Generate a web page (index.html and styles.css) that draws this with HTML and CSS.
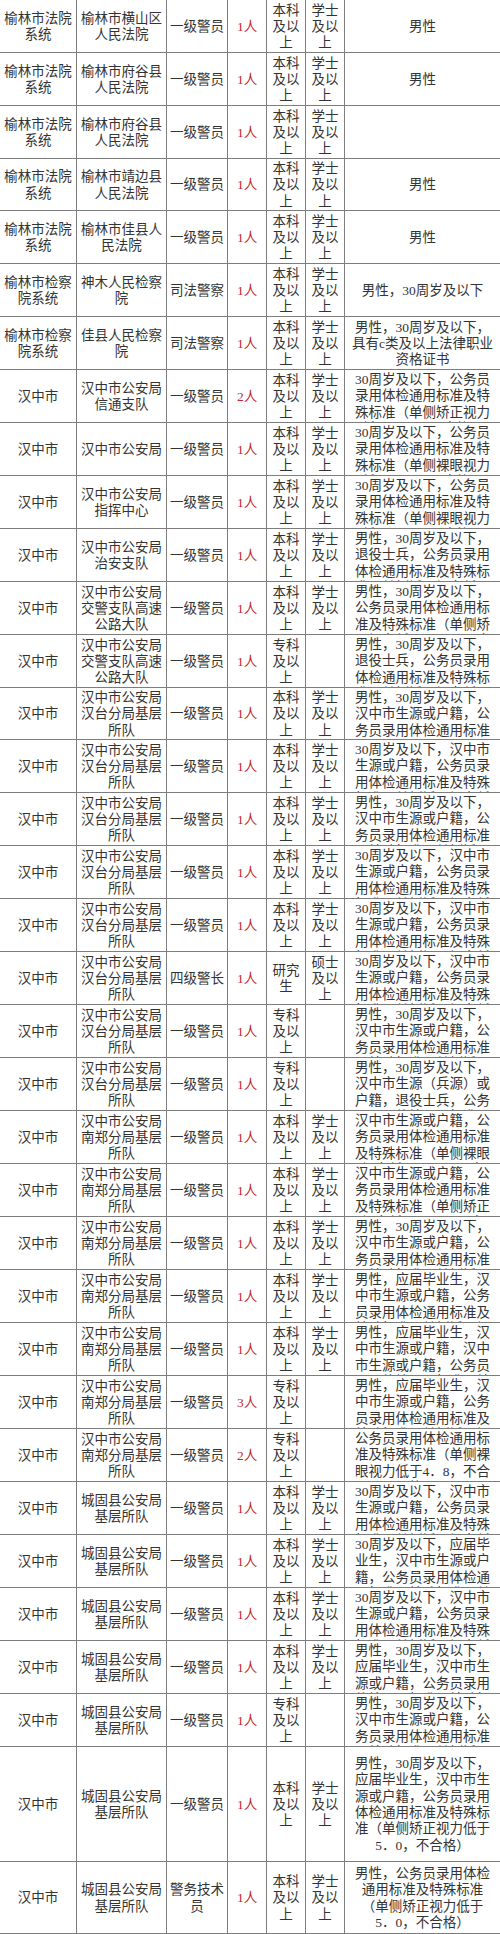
FILE: index.html
```html
<!DOCTYPE html>
<html lang="zh-CN">
<head>
<meta charset="utf-8">
<title>职位表</title>
<link rel="stylesheet" href="styles.css">
</head>
<body>
<div class="tbl">
  <div class="row"><div class="c"><span>榆林市法院系统</span></div><div class="c"><span>榆林市横山区人民法院</span></div><div class="c"><span>一级警员</span></div><div class="c num"><span>1人</span></div><div class="c"><span>本科及以上</span></div><div class="c"><span>学士及以上</span></div><div class="c"><span>男性</span></div></div>
  <div class="row"><div class="c"><span>榆林市法院系统</span></div><div class="c"><span>榆林市府谷县人民法院</span></div><div class="c"><span>一级警员</span></div><div class="c num"><span>1人</span></div><div class="c"><span>本科及以上</span></div><div class="c"><span>学士及以上</span></div><div class="c"><span>男性</span></div></div>
  <div class="row"><div class="c"><span>榆林市法院系统</span></div><div class="c"><span>榆林市府谷县人民法院</span></div><div class="c"><span>一级警员</span></div><div class="c num"><span>1人</span></div><div class="c"><span>本科及以上</span></div><div class="c"><span>学士及以上</span></div><div class="c"><span></span></div></div>
  <div class="row s"><div class="c"><span>榆林市法院系统</span></div><div class="c"><span>榆林市靖边县人民法院</span></div><div class="c"><span>一级警员</span></div><div class="c num"><span>1人</span></div><div class="c"><span>本科及以上</span></div><div class="c"><span>学士及以上</span></div><div class="c"><span>男性</span></div></div>
  <div class="row"><div class="c"><span>榆林市法院系统</span></div><div class="c"><span>榆林市佳县人民法院</span></div><div class="c"><span>一级警员</span></div><div class="c num"><span>1人</span></div><div class="c"><span>本科及以上</span></div><div class="c"><span>学士及以上</span></div><div class="c"><span>男性</span></div></div>
  <div class="row"><div class="c"><span>榆林市检察院系统</span></div><div class="c"><span>神木人民检察院</span></div><div class="c"><span>司法警察</span></div><div class="c num"><span>1人</span></div><div class="c"><span>本科及以上</span></div><div class="c"><span>学士及以上</span></div><div class="c"><span>男性，30周岁及以下</span></div></div>
  <div class="row"><div class="c"><span>榆林市检察院系统</span></div><div class="c"><span>佳县人民检察院</span></div><div class="c"><span>司法警察</span></div><div class="c num"><span>1人</span></div><div class="c"><span>本科及以上</span></div><div class="c"><span>学士及以上</span></div><div class="c"><span>男性，30周岁及以下，具有c类及以上法律职业资格证书</span></div></div>
  <div class="row"><div class="c"><span>汉中市</span></div><div class="c"><span>汉中市公安局信通支队</span></div><div class="c"><span>一级警员</span></div><div class="c num"><span>2人</span></div><div class="c"><span>本科及以上</span></div><div class="c"><span>学士及以上</span></div><div class="c"><span>30周岁及以下，公务员录用体检通用标准及特殊标准（单侧矫正视力低于<span class="nw">5．0</span>，不合格）</span></div></div>
  <div class="row"><div class="c"><span>汉中市</span></div><div class="c"><span>汉中市公安局</span></div><div class="c"><span>一级警员</span></div><div class="c num"><span>1人</span></div><div class="c"><span>本科及以上</span></div><div class="c"><span>学士及以上</span></div><div class="c"><span>30周岁及以下，公务员录用体检通用标准及特殊标准（单侧裸眼视力低于<span class="nw">4．8</span>，不合格）</span></div></div>
  <div class="row"><div class="c"><span>汉中市</span></div><div class="c"><span>汉中市公安局指挥中心</span></div><div class="c"><span>一级警员</span></div><div class="c num"><span>1人</span></div><div class="c"><span>本科及以上</span></div><div class="c"><span>学士及以上</span></div><div class="c"><span>30周岁及以下，公务员录用体检通用标准及特殊标准（单侧裸眼视力低于<span class="nw">4．8</span>，不合格）</span></div></div>
  <div class="row"><div class="c"><span>汉中市</span></div><div class="c"><span>汉中市公安局治安支队</span></div><div class="c"><span>一级警员</span></div><div class="c num"><span>1人</span></div><div class="c"><span>本科及以上</span></div><div class="c"><span>学士及以上</span></div><div class="c"><span>男性，30周岁及以下，退役士兵，公务员录用体检通用标准及特殊标准（单侧矫正视力低于<span class="nw">5．0</span>，不合格）</span></div></div>
  <div class="row"><div class="c"><span>汉中市</span></div><div class="c"><span>汉中市公安局交警支队高速公路大队</span></div><div class="c"><span>一级警员</span></div><div class="c num"><span>1人</span></div><div class="c"><span>本科及以上</span></div><div class="c"><span>学士及以上</span></div><div class="c"><span>男性，30周岁及以下，公务员录用体检通用标准及特殊标准（单侧矫正视力低于<span class="nw">5．0</span>，不合格）</span></div></div>
  <div class="row"><div class="c"><span>汉中市</span></div><div class="c"><span>汉中市公安局交警支队高速公路大队</span></div><div class="c"><span>一级警员</span></div><div class="c num"><span>1人</span></div><div class="c"><span>专科及以上</span></div><div class="c"><span></span></div><div class="c"><span>男性，30周岁及以下，退役士兵，公务员录用体检通用标准及特殊标准（单侧矫正视力低于<span class="nw">5．0</span>，不合格）</span></div></div>
  <div class="row s"><div class="c"><span>汉中市</span></div><div class="c"><span>汉中市公安局汉台分局基层所队</span></div><div class="c"><span>一级警员</span></div><div class="c num"><span>1人</span></div><div class="c"><span>本科及以上</span></div><div class="c"><span>学士及以上</span></div><div class="c"><span>男性，30周岁及以下，汉中市生源或户籍，公务员录用体检通用标准及特殊标准（单侧矫正视力低于<span class="nw">5．0</span>，不合格）</span></div></div>
  <div class="row"><div class="c"><span>汉中市</span></div><div class="c"><span>汉中市公安局汉台分局基层所队</span></div><div class="c"><span>一级警员</span></div><div class="c num"><span>1人</span></div><div class="c"><span>本科及以上</span></div><div class="c"><span>学士及以上</span></div><div class="c"><span>30周岁及以下，汉中市生源或户籍，公务员录用体检通用标准及特殊标准（单侧矫正视力低于<span class="nw">5．0</span>，不合格）</span></div></div>
  <div class="row"><div class="c"><span>汉中市</span></div><div class="c"><span>汉中市公安局汉台分局基层所队</span></div><div class="c"><span>一级警员</span></div><div class="c num"><span>1人</span></div><div class="c"><span>本科及以上</span></div><div class="c"><span>学士及以上</span></div><div class="c"><span>男性，30周岁及以下，汉中市生源或户籍，公务员录用体检通用标准及特殊标准（单侧矫正视力低于<span class="nw">5．0</span>，不合格）</span></div></div>
  <div class="row"><div class="c"><span>汉中市</span></div><div class="c"><span>汉中市公安局汉台分局基层所队</span></div><div class="c"><span>一级警员</span></div><div class="c num"><span>1人</span></div><div class="c"><span>本科及以上</span></div><div class="c"><span>学士及以上</span></div><div class="c"><span>30周岁及以下，汉中市生源或户籍，公务员录用体检通用标准及特殊标准（单侧矫正视力低于<span class="nw">5．0</span>，不合格）</span></div></div>
  <div class="row"><div class="c"><span>汉中市</span></div><div class="c"><span>汉中市公安局汉台分局基层所队</span></div><div class="c"><span>一级警员</span></div><div class="c num"><span>1人</span></div><div class="c"><span>本科及以上</span></div><div class="c"><span>学士及以上</span></div><div class="c"><span>30周岁及以下，汉中市生源或户籍，公务员录用体检通用标准及特殊标准（单侧裸眼视力低于<span class="nw">4．8</span>，不合格）</span></div></div>
  <div class="row"><div class="c"><span>汉中市</span></div><div class="c"><span>汉中市公安局汉台分局基层所队</span></div><div class="c"><span>四级警长</span></div><div class="c num"><span>1人</span></div><div class="c"><span>研究生</span></div><div class="c"><span>硕士及以上</span></div><div class="c"><span>30周岁及以下，汉中市生源或户籍，公务员录用体检通用标准及特殊标准（单侧矫正视力低于<span class="nw">5．0</span>，不合格）</span></div></div>
  <div class="row"><div class="c"><span>汉中市</span></div><div class="c"><span>汉中市公安局汉台分局基层所队</span></div><div class="c"><span>一级警员</span></div><div class="c num"><span>1人</span></div><div class="c"><span>专科及以上</span></div><div class="c"><span></span></div><div class="c"><span>男性，30周岁及以下，汉中市生源或户籍，公务员录用体检通用标准及特殊标准（单侧矫正视力低于<span class="nw">5．0</span>，不合格）</span></div></div>
  <div class="row"><div class="c"><span>汉中市</span></div><div class="c"><span>汉中市公安局汉台分局基层所队</span></div><div class="c"><span>一级警员</span></div><div class="c num"><span>1人</span></div><div class="c"><span>专科及以上</span></div><div class="c"><span></span></div><div class="c"><span>男性，30周岁及以下，汉中市生源（兵源）或户籍，退役士兵，公务员录用体检通用标准及特殊标准（单侧矫正视力低于<span class="nw">5．0</span>，不合格）</span></div></div>
  <div class="row"><div class="c"><span>汉中市</span></div><div class="c"><span>汉中市公安局南郑分局基层所队</span></div><div class="c"><span>一级警员</span></div><div class="c num"><span>1人</span></div><div class="c"><span>本科及以上</span></div><div class="c"><span>学士及以上</span></div><div class="c"><span>汉中市生源或户籍，公务员录用体检通用标准及特殊标准（单侧裸眼视力低于<span class="nw">4．8</span>，不合格）</span></div></div>
  <div class="row"><div class="c"><span>汉中市</span></div><div class="c"><span>汉中市公安局南郑分局基层所队</span></div><div class="c"><span>一级警员</span></div><div class="c num"><span>1人</span></div><div class="c"><span>本科及以上</span></div><div class="c"><span>学士及以上</span></div><div class="c"><span>汉中市生源或户籍，公务员录用体检通用标准及特殊标准（单侧矫正视力低于<span class="nw">5．0</span>，不合格）</span></div></div>
  <div class="row"><div class="c"><span>汉中市</span></div><div class="c"><span>汉中市公安局南郑分局基层所队</span></div><div class="c"><span>一级警员</span></div><div class="c num"><span>1人</span></div><div class="c"><span>本科及以上</span></div><div class="c"><span>学士及以上</span></div><div class="c"><span>男性，30周岁及以下，汉中市生源或户籍，公务员录用体检通用标准及特殊标准（单侧矫正视力低于<span class="nw">5．0</span>，不合格）</span></div></div>
  <div class="row"><div class="c"><span>汉中市</span></div><div class="c"><span>汉中市公安局南郑分局基层所队</span></div><div class="c"><span>一级警员</span></div><div class="c num"><span>1人</span></div><div class="c"><span>本科及以上</span></div><div class="c"><span>学士及以上</span></div><div class="c"><span>男性，应届毕业生，汉中市生源或户籍，公务员录用体检通用标准及特殊标准（单侧矫正视力低于<span class="nw">5．0</span>，不合格）</span></div></div>
  <div class="row"><div class="c"><span>汉中市</span></div><div class="c"><span>汉中市公安局南郑分局基层所队</span></div><div class="c"><span>一级警员</span></div><div class="c num"><span>1人</span></div><div class="c"><span>本科及以上</span></div><div class="c"><span>学士及以上</span></div><div class="c"><span>男性，应届毕业生，汉中市生源或户籍，汉中市生源或户籍，公务员录用体检通用标准及特殊标准（单侧矫正视力低于<span class="nw">5．0</span>，不合格）</span></div></div>
  <div class="row"><div class="c"><span>汉中市</span></div><div class="c"><span>汉中市公安局南郑分局基层所队</span></div><div class="c"><span>一级警员</span></div><div class="c num"><span>3人</span></div><div class="c"><span>专科及以上</span></div><div class="c"><span></span></div><div class="c"><span>男性，应届毕业生，汉中市生源或户籍，公务员录用体检通用标准及特殊标准（单侧矫正视力低于<span class="nw">5．0</span>，不合格）</span></div></div>
  <div class="row"><div class="c"><span>汉中市</span></div><div class="c"><span>汉中市公安局南郑分局基层所队</span></div><div class="c"><span>一级警员</span></div><div class="c num"><span>2人</span></div><div class="c"><span>专科及以上</span></div><div class="c"><span></span></div><div class="c"><span>公务员录用体检通用标准及特殊标准（单侧裸眼视力低于<span class="nw">4．8</span>，不合格）</span></div></div>
  <div class="row"><div class="c"><span>汉中市</span></div><div class="c"><span>城固县公安局基层所队</span></div><div class="c"><span>一级警员</span></div><div class="c num"><span>1人</span></div><div class="c"><span>本科及以上</span></div><div class="c"><span>学士及以上</span></div><div class="c"><span>30周岁及以下，汉中市生源或户籍，公务员录用体检通用标准及特殊标准（单侧矫正视力低于<span class="nw">5．0</span>，不合格）</span></div></div>
  <div class="row"><div class="c"><span>汉中市</span></div><div class="c"><span>城固县公安局基层所队</span></div><div class="c"><span>一级警员</span></div><div class="c num"><span>1人</span></div><div class="c"><span>本科及以上</span></div><div class="c"><span>学士及以上</span></div><div class="c"><span>30周岁及以下，应届毕业生，汉中市生源或户籍，公务员录用体检通用标准及特殊标准（单侧矫正视力低于<span class="nw">5．0</span>，不合格）</span></div></div>
  <div class="row"><div class="c"><span>汉中市</span></div><div class="c"><span>城固县公安局基层所队</span></div><div class="c"><span>一级警员</span></div><div class="c num"><span>1人</span></div><div class="c"><span>本科及以上</span></div><div class="c"><span>学士及以上</span></div><div class="c"><span>30周岁及以下，汉中市生源或户籍，公务员录用体检通用标准及特殊标准（单侧矫正视力低于<span class="nw">5．0</span>，不合格）</span></div></div>
  <div class="row"><div class="c"><span>汉中市</span></div><div class="c"><span>城固县公安局基层所队</span></div><div class="c"><span>一级警员</span></div><div class="c num"><span>1人</span></div><div class="c"><span>本科及以上</span></div><div class="c"><span>学士及以上</span></div><div class="c"><span>男性，30周岁及以下，应届毕业生，汉中市生源或户籍，公务员录用体检通用标准及特殊标准（单侧矫正视力低于<span class="nw">5．0</span>，不合格）</span></div></div>
  <div class="row"><div class="c"><span>汉中市</span></div><div class="c"><span>城固县公安局基层所队</span></div><div class="c"><span>一级警员</span></div><div class="c num"><span>1人</span></div><div class="c"><span>专科及以上</span></div><div class="c"><span></span></div><div class="c"><span>男性，30周岁及以下，汉中市生源或户籍，公务员录用体检通用标准及特殊标准（单侧矫正视力低于<span class="nw">5．0</span>，不合格）</span></div></div>
  <div class="row tall"><div class="c"><span>汉中市</span></div><div class="c"><span>城固县公安局基层所队</span></div><div class="c"><span>一级警员</span></div><div class="c num"><span>1人</span></div><div class="c"><span>本科及以上</span></div><div class="c"><span>学士及以上</span></div><div class="c"><span>男性，30周岁及以下，应届毕业生，汉中市生源或户籍，公务员录用体检通用标准及特殊标准（单侧矫正视力低于<span class="nw">5．0</span>，不合格）</span></div></div>
  <div class="row last"><div class="c"><span>汉中市</span></div><div class="c"><span>城固县公安局基层所队</span></div><div class="c"><span>警务技术员</span></div><div class="c num"><span>1人</span></div><div class="c"><span>本科及以上</span></div><div class="c"><span>学士及以上</span></div><div class="c"><span>男性，公务员录用体检通用标准及特殊标准（单侧矫正视力低于<span class="nw">5．0</span>，不合格）</span></div></div>
</div>
</body>
</html>
```

FILE: styles.css
```css
* {
  box-sizing: border-box;
  margin: 0;
  padding: 0;
}

html,
body {
  background: #ffffff;
}

body {
  width: 500px;
  font-family: "Liberation Serif", "Noto Sans CJK SC", serif;
  font-size: 13.5px;
  line-height: 16.3px;
  color: #333333;
  text-spacing-trim: space-all;
}

.tbl {
  width: 500px;
}

.row {
  display: grid;
  grid-template-columns: 77px 90px 61px 39px 39px 39px 155px;
  height: 53px;
}

.row.s {
  height: 52px;
}

.row.tall {
  height: 115px;
}

.row.last {
  height: 72px;
}

.c {
  display: flex;
  flex-direction: column;
  overflow: hidden;
  border-right: 1px solid #7d7d7d;
  border-bottom: 1px solid #7d7d7d;
  padding: 2px 2px 0;
  text-align: center;
}

.c:last-child {
  border-right: 0;
  padding: 2px 5px 0;
}

.c > span {
  display: block;
  margin: auto 0;
}

.num {
  color: #c1272d;
}

.nw {
  white-space: nowrap;
}
```
